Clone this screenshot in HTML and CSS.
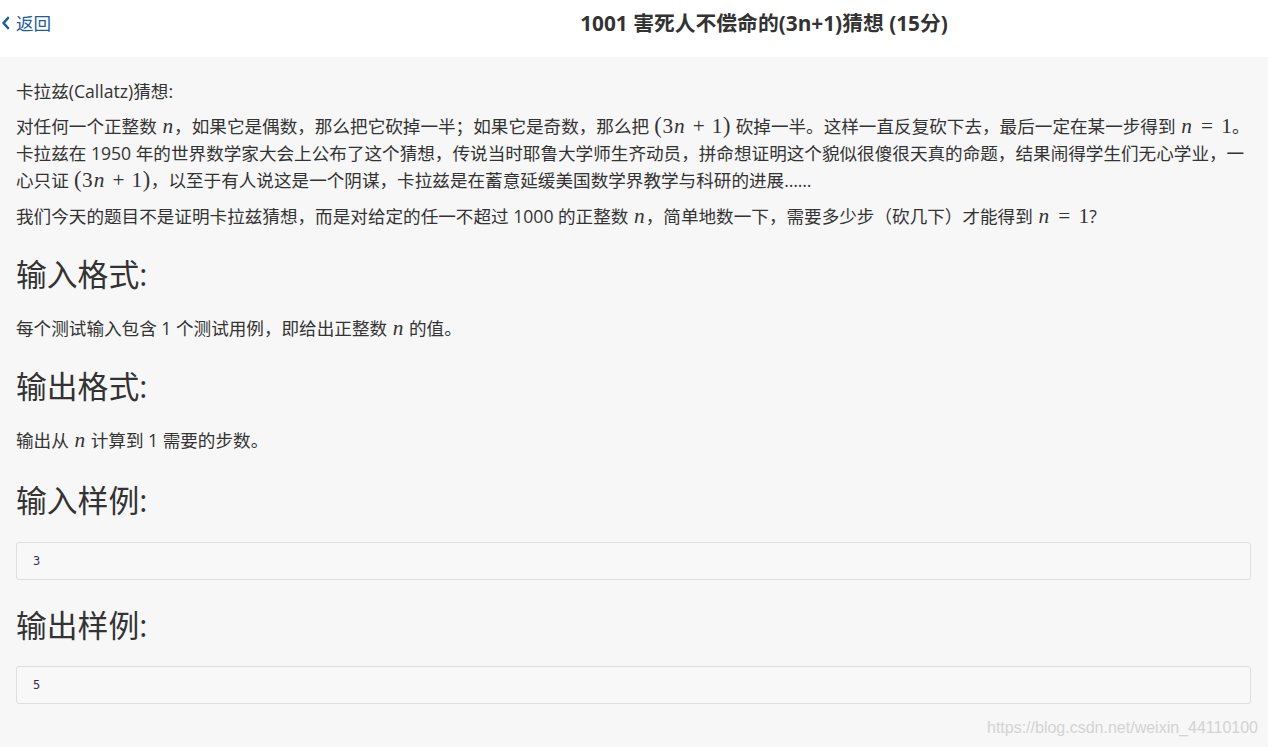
FILE: index.html
```html
<!DOCTYPE html>
<html lang="zh-CN">
<head>
<meta charset="utf-8">
<title>1001 害死人不偿命的(3n+1)猜想 (15分)</title>
<link rel="stylesheet" href="styles.css">
</head>
<body>
<header class="topbar">
  <a class="back" href="#">
    <svg class="chev" width="9" height="14" viewBox="0 0 9 14"><polyline points="7,2 2.5,7 7,12" fill="none" stroke="#1d5c9e" stroke-width="2.6" stroke-linecap="round" stroke-linejoin="round"/></svg>
    <span>返回</span>
  </a>
  <h1 class="title">1001 害死人不偿命的(3n+1)猜想 (15分)</h1>
</header>
<main class="content">
  <p class="para">卡拉兹(Callatz)猜想:</p>
  <p class="para">对任何一个正整数 <span class="m"><span class="mi">n</span></span>，如果它是偶数，那么把它砍掉一半；如果它是奇数，那么把 <span class="m"><span class="mp">(</span><span class="mn">3</span><span class="mi">n</span><span class="mo bin">+</span><span class="mn">1</span><span class="mp">)</span></span> 砍掉一半。这样一直反复砍下去，最后一定在某一步得到 <span class="m"><span class="mi">n</span><span class="mo rel">=</span><span class="mn">1</span></span>。卡拉兹在 1950 年的世界数学家大会上公布了这个猜想，传说当时耶鲁大学师生齐动员，拼命想证明这个貌似很傻很天真的命题，结果闹得学生们无心学业，一心只证 <span class="m"><span class="mp">(</span><span class="mn">3</span><span class="mi">n</span><span class="mo bin">+</span><span class="mn">1</span><span class="mp">)</span></span>，以至于有人说这是一个阴谋，卡拉兹是在蓄意延缓美国数学界教学与科研的进展……</p>
  <p class="para">我们今天的题目不是证明卡拉兹猜想，而是对给定的任一不超过 1000 的正整数 <span class="m"><span class="mi">n</span></span>，简单地数一下，需要多少步（砍几下）才能得到 <span class="m"><span class="mi">n</span><span class="mo rel">=</span><span class="mn">1</span></span>?</p>

  <h2 class="sec">输入格式:</h2>
  <p class="para">每个测试输入包含 1 个测试用例，即给出正整数 <span class="m"><span class="mi">n</span></span> 的值。</p>

  <h2 class="sec">输出格式:</h2>
  <p class="para">输出从 <span class="m"><span class="mi">n</span></span> 计算到 1 需要的步数。</p>

  <h2 class="sec sec-sample">输入样例:</h2>
  <pre class="sample">3</pre>

  <h2 class="sec sec-sample">输出样例:</h2>
  <pre class="sample">5</pre>
</main>
<div class="watermark">https://blog.csdn.net/weixin_44110100</div>
</body>
</html>
```
FILE: styles.css
```css
html, body {
  margin: 0;
  padding: 0;
}
body {
  background: #f7f7f7;
  color: #333;
  font-family: "Open Sans", "Noto Sans CJK SC", sans-serif;
  font-size: 17.6px;
  min-height: 747px;
  position: relative;
  overflow: hidden;
}
.topbar {
  height: 57px;
  background: #fff;
  display: flex;
  align-items: center;
}
.back {
  width: 260px;
  flex: none;
  display: flex;
  align-items: center;
  gap: 6px;
  padding-left: 1px;
  box-sizing: border-box;
  color: #1d5c9e;
  text-decoration: none;
  font-size: 17.6px;
  margin-top: -12px;
}
.chev {
  display: block;
}
.title {
  flex: 1;
  margin: 0 0 12px 0;
  text-align: center;
  font-size: 20.8px;
  font-weight: 700;
  color: #333;
  line-height: 26px;
}
.content {
  padding: 21px 17px 30px 16px;
}
.para {
  margin: 0 0 9px 0;
  line-height: 27px;
  color: #333;
}
.para:first-child {
  line-height: 26px;
  margin-bottom: 9px;
}
.m {
  font-family: "Liberation Serif", "DejaVu Serif", serif;
  font-size: 21.3px;
  line-height: 1;
  white-space: nowrap;
}
.mi {
  display: inline-block;
  width: 0.6em;
  font-style: italic;
  text-align: center;
}
.mn {
  display: inline-block;
  width: 0.5em;
  text-align: center;
}
.mp {
  display: inline-block;
  width: 0.389em;
  text-align: center;
  font-size: 1.05em;
}
.mo {
  display: inline-block;
  width: 0.778em;
  text-align: center;
}
.mo.bin {
  margin: 0 0.222em;
}
.mo.rel {
  margin: 0 0.278em;
}
.sec {
  margin: 24px 0 21px 0;
  font-size: 30.8px;
  line-height: 40px;
  font-weight: 400;
  color: #333;
}
.sec-sample {
  margin-top: 26px;
  margin-bottom: 22px;
}
.sample + .sec-sample {
  margin-top: 25px;
  margin-bottom: 21px;
}
.sample {
  margin: 0;
  background: #f8f8f8;
  border: 1px solid #dedede;
  border-radius: 3px;
  padding: 10px 16px;
  height: 16px;
  font-family: "DejaVu Sans Mono", "Liberation Mono", monospace;
  font-size: 12px;
  line-height: 17px;
  color: #3b2c4d;
}
.watermark {
  position: absolute;
  right: 10px;
  top: 717px;
  font-family: "Liberation Sans", Arial, sans-serif;
  font-size: 16px;
  color: #d3d3d3;
  line-height: 22px;
}
```
